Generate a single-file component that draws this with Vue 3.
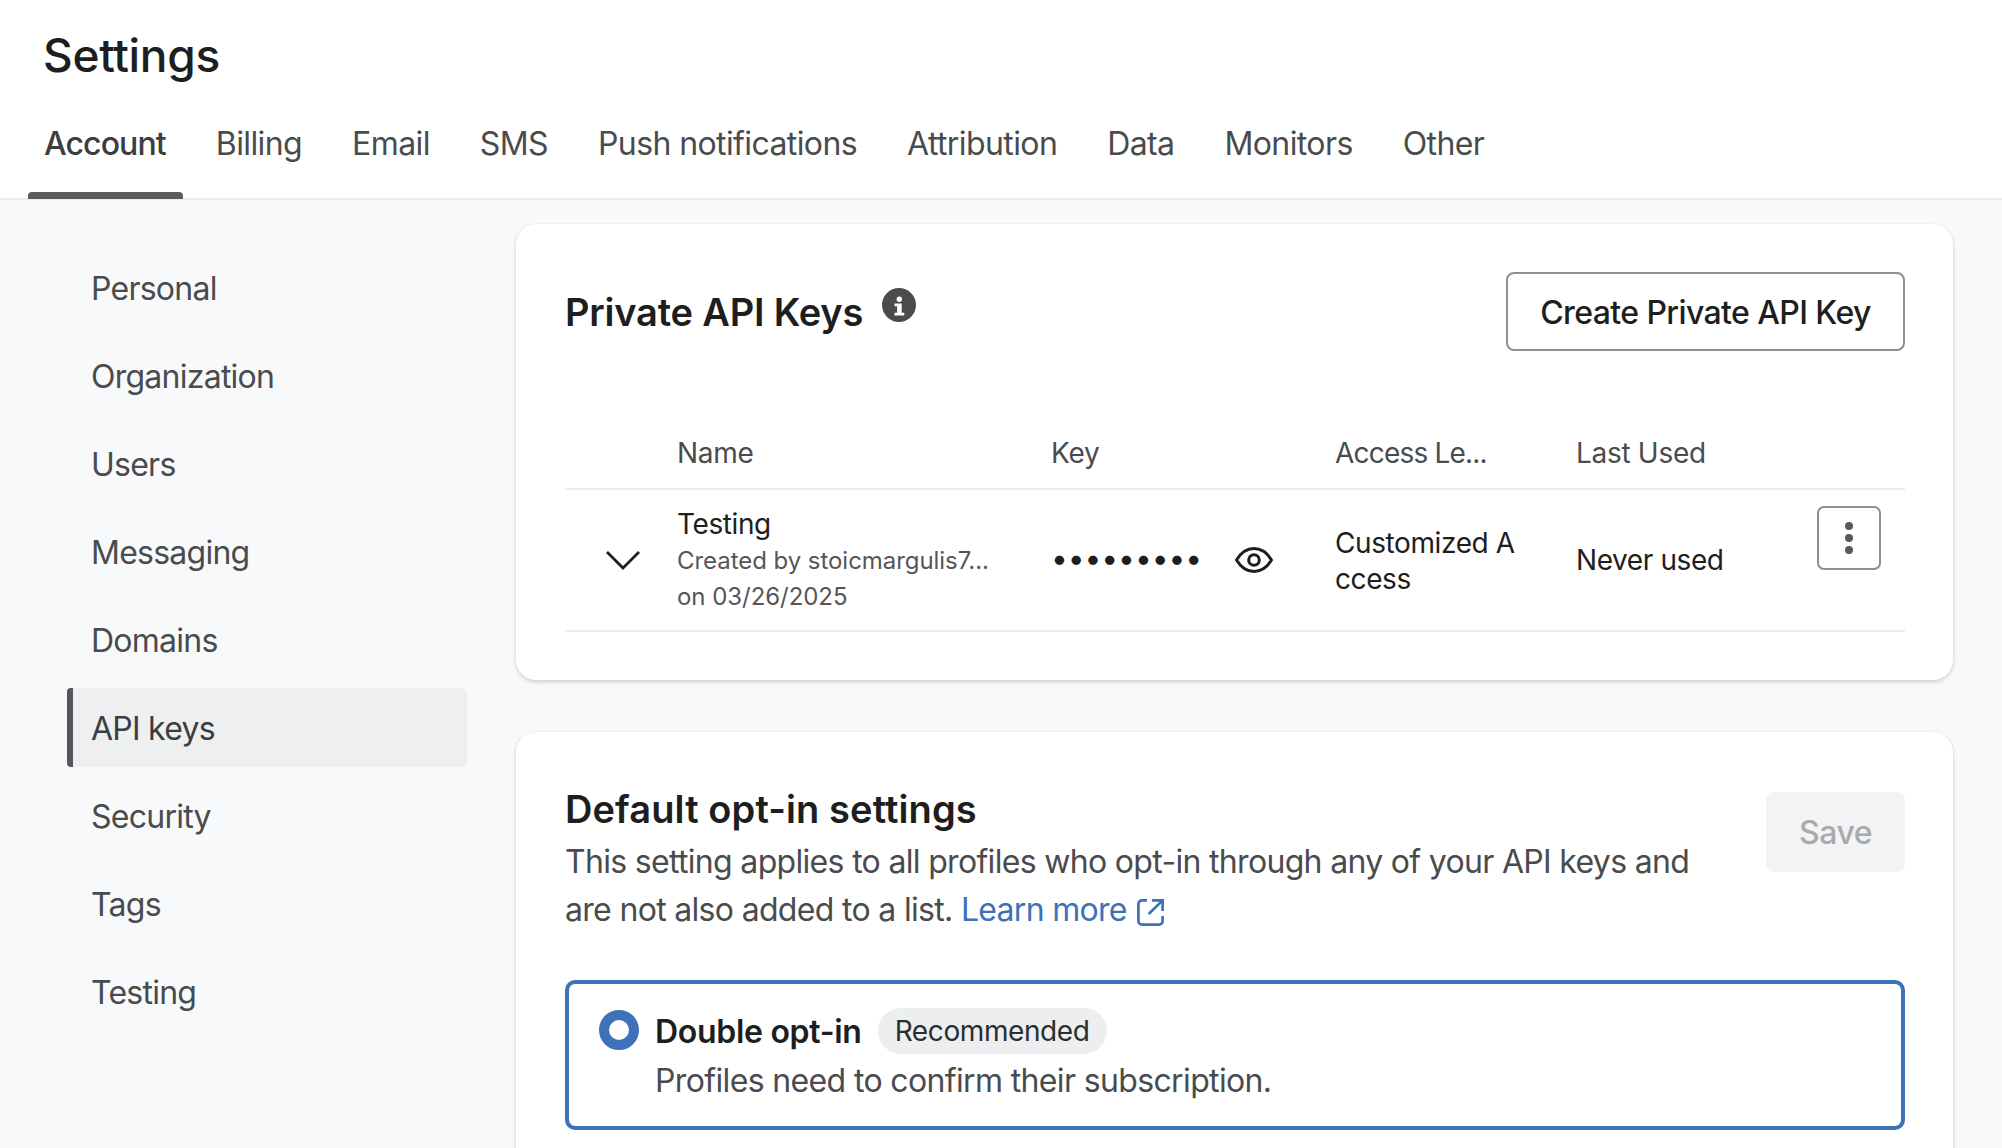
<script setup>
const tabs = ['Account', 'Billing', 'Email', 'SMS', 'Push notifications', 'Attribution', 'Data', 'Monitors', 'Other']
const items = ['Personal', 'Organization', 'Users', 'Messaging', 'Domains', 'API keys', 'Security', 'Tags', 'Testing']
</script>

<template>
  <div class="page">
    <header class="top">
      <h1 class="page-title">Settings</h1>
      <nav class="tabs">
        <a v-for="(t, i) in tabs" :key="t" class="tab" :class="{ active: i === 0 }">{{ t }}</a>
      </nav>
    </header>
    <div class="body">
      <aside class="side">
        <a v-for="s in items" :key="s" class="side-item" :class="{ active: s === 'API keys' }">{{ s }}</a>
      </aside>
      <main class="main">
        <section class="card keys">
          <div class="card-head">
            <div class="title-wrap">
              <h2 class="card-title">Private API Keys</h2>
              <svg class="info" viewBox="0 0 34 34" width="34" height="34">
                <circle cx="17" cy="17" r="17" fill="#4a4b4d" />
                <circle cx="17.300" cy="11.300" r="2.700" fill="#fff" />
                <path d="M12.500 15.500h7.200v9.300h2.600v2.700H12.500v-2.700h2.600v-6.600h-2.600z" fill="#fff" />
              </svg>
            </div>
            <button class="btn-outline">Create Private API Key</button>
          </div>
          <div class="row head-row">
            <span></span>
            <span>Name</span>
            <span>Key</span>
            <span class="trunc">Access Le...</span>
            <span>Last Used</span>
            <span></span>
          </div>
          <div class="row data-row">
            <svg class="chev" viewBox="0 0 36 22" width="36" height="22">
              <path d="M2 3l16 16L34 3" fill="none" stroke="#1d1e20" stroke-width="2.800" />
            </svg>
            <div class="name-cell">
              <div class="name">Testing</div>
              <div class="meta">Created by stoicmargulis7...</div>
              <div class="meta">on 03/26/2025</div>
            </div>
            <div class="key-cell">
              <span class="dots">•••••••••</span>
              <svg class="eye" viewBox="0 0 38 26" width="38" height="26">
                <path d="M1.500 13C6 5.500 12 1.500 19 1.500S32 5.500 36.500 13C32 20.500 26 24.500 19 24.500S6 20.500 1.500 13z" fill="none" stroke="#1d1e20" stroke-width="3" stroke-linejoin="round" />
                <circle cx="19" cy="13" r="5.300" fill="none" stroke="#1d1e20" stroke-width="3" />
              </svg>
            </div>
            <div class="access">Customized A<br />ccess</div>
            <div class="last">Never used</div>
            <button class="kebab">
              <i></i><i></i><i></i>
            </button>
          </div>
        </section>

        <section class="card optin">
          <div class="optin-head">
            <div class="optin-text">
              <h2 class="optin-title">Default opt-in settings</h2>
              <p class="desc">
                This setting applies to all profiles who opt-in through any of your API keys and are not also added to a list.
                <a class="link">Learn more
                  <svg class="ext" viewBox="0 0 27 27" width="27" height="27">
                    <path d="M10 1.400H5A3.600 3.600 0 0 0 1.400 5v17A3.600 3.600 0 0 0 5 25.600h17a3.600 3.600 0 0 0 3.600-3.600v-5M15 1.400h10.600V12M25.600 1.400L11.700 15" fill="none" stroke="#3d72b8" stroke-width="2.700" />
                  </svg>
                </a>
              </p>
            </div>
            <button class="btn-save">Save</button>
          </div>
          <div class="option">
            <span class="radio"></span>
            <div class="option-body">
              <div class="option-top">
                <strong class="option-name">Double opt-in</strong>
                <span class="badge">Recommended</span>
              </div>
              <div class="option-desc">Profiles need to confirm their subscription.</div>
            </div>
          </div>
        </section>
      </main>
    </div>
  </div>
</template>

<style>
html, body { margin: 0; height: 100%; overflow: hidden; background: #f8f9fa; }
</style>

<style scoped>
.page {
  height: 1148px;
  overflow: hidden;
  font-family: Inter, "Liberation Sans", sans-serif;
  color: #1d1e20;
  background: #f8f9fa;
}
.top {
  background: #fff;
  border-bottom: 2px solid #e9ebed;
  height: 198px;
  padding-left: 28px;
}
.page-title {
  margin: 0;
  padding: 25px 0 0 15px;
  font-size: 46px;
  line-height: 60px;
  font-weight: 500;
  letter-spacing: -0.3px;
}
.tabs {
  display: flex;
  margin-top: 26px;
}
.tab {
  position: relative;
  padding: 0 17px 0 16px;
  height: 87px;
  line-height: 65px;
  font-size: 32px;
  letter-spacing: -0.6px;
  color: #4a4b4d;
  margin-right: 17px;
  white-space: nowrap;
}
.tab.active {
  color: #3c3d3f;
  font-weight: 500;
  letter-spacing: -0.9px;
}
.tab.active::after {
  content: "";
  position: absolute;
  left: 0;
  right: 0;
  bottom: -1px;
  height: 7px;
  background: #5a5b5d;
  border-radius: 4px 4px 0 0;
}
.body {
  display: flex;
}
.side {
  width: 516px;
  flex: none;
  box-sizing: border-box;
  padding: 48px 0 0 67px;
  display: flex;
  flex-direction: column;
  gap: 9px;
}
.side-item {
  width: 400px;
  height: 79px;
  box-sizing: border-box;
  padding: 2px 0 0 24px;
  display: flex;
  align-items: center;
  font-size: 32px;
  letter-spacing: -0.75px;
  color: #4a4b4d;
}
.side-item.active {
  background: #eeeff0;
  border-left: 6px solid #55565a;
  padding-left: 18px;
  border-radius: 4px 6px 6px 4px;
  color: #3c3d3f;
}
.main {
  flex: 1;
  padding: 24px 49px 0 0;
  display: flex;
  flex-direction: column;
  gap: 52px;
}
.card {
  background: #fff;
  border-radius: 20px;
  box-shadow: 0 2px 4px rgba(0, 0, 0, 0.16), 0 0 2px rgba(0, 0, 0, 0.06);
  padding: 48px 48px 48px 49px;
}
.keys {
  height: 456px;
  box-sizing: border-box;
}
.card-head {
  display: flex;
  justify-content: space-between;
  align-items: flex-start;
  height: 79px;
}
.title-wrap {
  display: flex;
  align-items: center;
  height: 79px;
  gap: 18px;
}
.card-title {
  margin: 2px 0 0;
  font-size: 38px;
  font-weight: 600;
  line-height: 79px;
  letter-spacing: -0.2px;
}
.info {
  margin: -14px 0 0 1px;
}
.btn-outline {
  font: inherit;
  font-size: 32px;
  font-weight: 500;
  letter-spacing: -0.6px;
  color: #1d1e20;
  background: #fff;
  border: 2px solid #8e8f91;
  border-radius: 8px;
  width: 399px;
  height: 79px;
  padding: 2px 0 0;
}
.row {
  display: grid;
  grid-template-columns: 112px 374px 284px 241px 241px 1fr;
  align-items: center;
}
.head-row {
  margin-top: 66px;
  height: 71px;
  border-bottom: 2px solid #e9ebed;
  font-size: 28px;
  letter-spacing: -0.3px;
  color: #4a4b4d;
}
.trunc {
  letter-spacing: -0.8px;
}
.data-row {
  height: 140px;
  border-bottom: 2px solid #e9ebed;
  font-size: 28px;
  letter-spacing: -0.4px;
}
.chev {
  margin-left: 40px;
}
.name {
  font-size: 28px;
  line-height: 37px;
}
.meta {
  font-size: 24px;
  line-height: 36px;
  letter-spacing: -0.05px;
  color: #55565a;
}
.key-cell {
  display: flex;
  align-items: center;
}
.dots {
  font-size: 30px;
  letter-spacing: -0.1px;
  margin: 0 0 4px;
  width: 184px;
  white-space: nowrap;
}
.access {
  line-height: 36px;
  padding-top: 1px;
}
.kebab {
  align-self: start;
  width: 64px;
  height: 64px;
  margin: 16px 0 0;
  padding: 0;
  background: #fff;
  border: 2px solid #8e8f91;
  border-radius: 7px;
  display: flex;
  flex-direction: column;
  align-items: center;
  justify-content: center;
  gap: 3.700px;
}
.kebab i {
  width: 8px;
  height: 8px;
  border-radius: 50%;
  background: #58595b;
}
.optin {
  padding-top: 53px;
}
.optin-head {
  display: flex;
  justify-content: space-between;
  align-items: flex-start;
}
.optin-text {
  width: 1160px;
}
.optin-title {
  margin: 0;
  font-size: 38px;
  font-weight: 600;
  line-height: 48px;
  letter-spacing: 0.1px;
}
.desc {
  margin: 5px 0 0;
  font-size: 32px;
  line-height: 48px;
  letter-spacing: -0.68px;
  color: #4a4b4d;
}
.link {
  color: #3d72b8;
  letter-spacing: -0.7px;
}
.ext {
  vertical-align: -5px;
  margin-left: 2px;
}
.btn-save {
  font: inherit;
  font-size: 32px;
  font-weight: 500;
  letter-spacing: -0.5px;
  color: #a9aaac;
  background: #f2f3f4;
  border: 0;
  border-radius: 8px;
  width: 139px;
  height: 80px;
  margin-top: 7px;
  padding: 0;
}
.option {
  margin-top: 46px;
  height: 150px;
  box-sizing: border-box;
  border: 4px solid #3d72b8;
  border-radius: 10px;
  display: flex;
  padding: 26px 0 0 30px;
}
.radio {
  width: 40px;
  height: 40px;
  border-radius: 50%;
  box-sizing: border-box;
  border: 10px solid #3d72b8;
  background: #fff;
  flex: none;
}
.option-body {
  margin-left: 16px;
}
.option-top {
  display: flex;
  align-items: center;
  height: 46px;
  margin-top: -2px;
}
.option-name {
  font-size: 32px;
  font-weight: 600;
  letter-spacing: -0.3px;
}
.badge {
  margin-left: 16px;
  height: 46px;
  line-height: 46px;
  padding: 0 17px;
  border-radius: 23px;
  background: #edeef0;
  font-size: 28px;
  letter-spacing: -0.4px;
  color: #2c2d2f;
}
.option-desc {
  font-size: 32px;
  line-height: 48px;
  margin-top: 3px;
  letter-spacing: -0.64px;
  color: #4a4b4d;
}
</style>
